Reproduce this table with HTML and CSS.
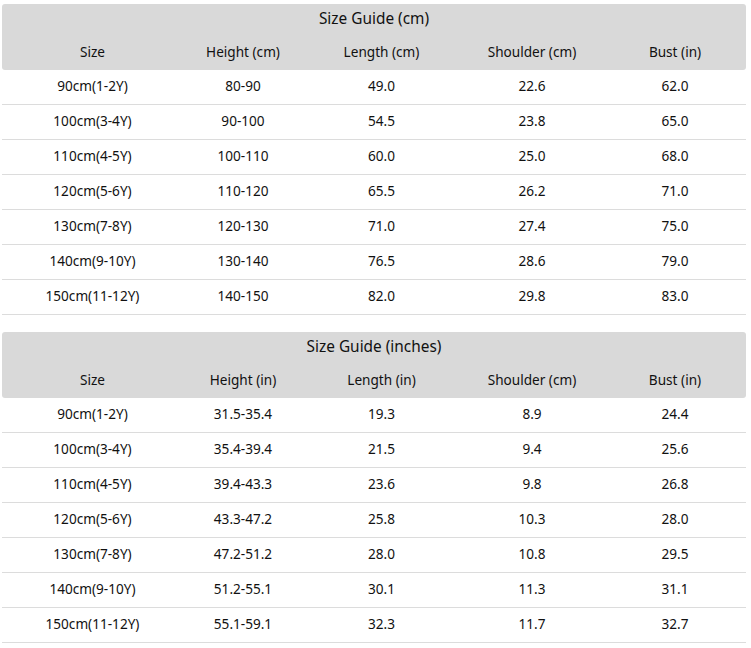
FILE: index.html
```html
<!DOCTYPE html>
<html>
<head>
<meta charset="utf-8">
<link rel="stylesheet" href="styles.css">
</head>
<body>
<table class="guide">
  <colgroup><col class="c1"><col class="c2"><col class="c3"><col class="c4"><col class="c5"></colgroup>
  <thead>
    <tr class="title"><th colspan="5">Size Guide (cm)</th></tr>
    <tr class="heads"><th>Size</th><th>Height (cm)</th><th>Length (cm)</th><th>Shoulder (cm)</th><th>Bust (in)</th></tr>
  </thead>
  <tbody>
    <tr><td>90cm(1-2Y)</td><td>80-90</td><td>49.0</td><td>22.6</td><td>62.0</td></tr>
    <tr><td>100cm(3-4Y)</td><td>90-100</td><td>54.5</td><td>23.8</td><td>65.0</td></tr>
    <tr><td>110cm(4-5Y)</td><td>100-110</td><td>60.0</td><td>25.0</td><td>68.0</td></tr>
    <tr><td>120cm(5-6Y)</td><td>110-120</td><td>65.5</td><td>26.2</td><td>71.0</td></tr>
    <tr><td>130cm(7-8Y)</td><td>120-130</td><td>71.0</td><td>27.4</td><td>75.0</td></tr>
    <tr><td>140cm(9-10Y)</td><td>130-140</td><td>76.5</td><td>28.6</td><td>79.0</td></tr>
    <tr><td>150cm(11-12Y)</td><td>140-150</td><td>82.0</td><td>29.8</td><td>83.0</td></tr>
  </tbody>
</table>
<table class="guide second">
  <colgroup><col class="c1"><col class="c2"><col class="c3"><col class="c4"><col class="c5"></colgroup>
  <thead>
    <tr class="title"><th colspan="5">Size Guide (inches)</th></tr>
    <tr class="heads"><th>Size</th><th>Height (in)</th><th>Length (in)</th><th>Shoulder (cm)</th><th>Bust (in)</th></tr>
  </thead>
  <tbody>
    <tr><td>90cm(1-2Y)</td><td>31.5-35.4</td><td>19.3</td><td>8.9</td><td>24.4</td></tr>
    <tr><td>100cm(3-4Y)</td><td>35.4-39.4</td><td>21.5</td><td>9.4</td><td>25.6</td></tr>
    <tr><td>110cm(4-5Y)</td><td>39.4-43.3</td><td>23.6</td><td>9.8</td><td>26.8</td></tr>
    <tr><td>120cm(5-6Y)</td><td>43.3-47.2</td><td>25.8</td><td>10.3</td><td>28.0</td></tr>
    <tr><td>130cm(7-8Y)</td><td>47.2-51.2</td><td>28.0</td><td>10.8</td><td>29.5</td></tr>
    <tr><td>140cm(9-10Y)</td><td>51.2-55.1</td><td>30.1</td><td>11.3</td><td>31.1</td></tr>
    <tr><td>150cm(11-12Y)</td><td>55.1-59.1</td><td>32.3</td><td>11.7</td><td>32.7</td></tr>
  </tbody>
</table>
</body>
</html>
```
FILE: styles.css
```css
html, body {
  margin: 0;
  padding: 0;
  background: #ffffff;
}
body {
  padding: 4px 5px 0 2px;
  font-family: "Noto Sans", "Open Sans", sans-serif;
  font-size: 13.6px;
  color: #111111;
}
.guide {
  width: 744px;
  border-collapse: separate;
  border-spacing: 0;
  table-layout: fixed;
}
.second {
  margin-top: 17px;
}
.c1 { width: 181px; }
.c2 { width: 120px; }
.c3 { width: 157px; }
.c4 { width: 144px; }
.c5 { width: 142px; }
.guide th, .guide td {
  padding: 0;
  text-align: center;
  font-weight: normal;
  white-space: nowrap;
}
.guide thead th {
  background: #d9d9d9;
}
.title th {
  height: 31px;
  font-size: 15.4px;
  vertical-align: middle;
  padding-bottom: 2px;
  box-sizing: border-box;
  border-radius: 3px 3px 0 0;
}
.heads th {
  height: 35px;
  vertical-align: middle;
  padding-bottom: 3px;
  box-sizing: border-box;
}
.heads th:first-child { border-bottom-left-radius: 3px; }
.heads th:last-child { border-bottom-right-radius: 3px; }
.guide td {
  height: 35px;
  border-bottom: 1px solid #dcdcdc;
  vertical-align: middle;
  padding-bottom: 3px;
  box-sizing: border-box;
}
```
